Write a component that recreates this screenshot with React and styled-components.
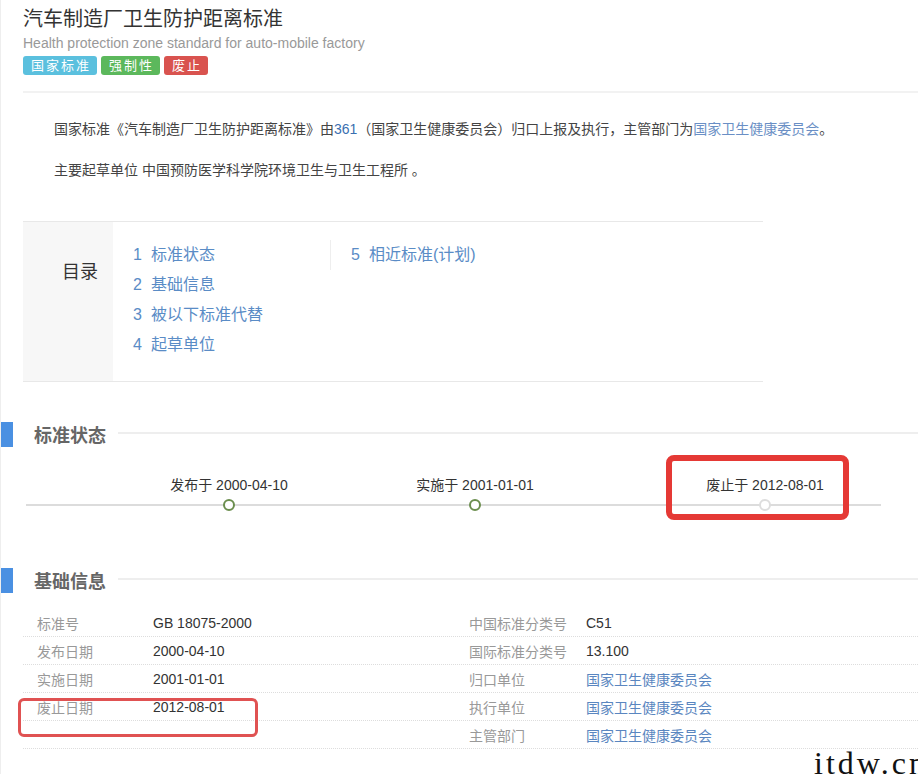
import React from "react"
import styled, { createGlobalStyle } from "styled-components"

const GlobalStyle = createGlobalStyle`
  html, body {
    margin: 0;
    padding: 0;
    background: #ffffff;
    overflow: hidden;
  }
  body {
    font-family: "Liberation Sans", Arial, "Noto Sans CJK SC", sans-serif;
    color: #333;
  }
`

const cjk = `"Liberation Sans", Arial, "Noto Sans CJK SC", sans-serif`

const tocItems = [
  { n: 1, t: "标准状态" },
  { n: 2, t: "基础信息" },
  { n: 3, t: "被以下标准代替" },
  { n: 4, t: "起草单位" },
]

const stops = [
  { label: "发布于 2000-04-10", offset: 123, done: true },
  { label: "实施于 2001-01-01", offset: 86, done: true },
  { label: "废止于 2012-08-01", offset: 130, done: false },
]

const rows = [
  { l1: "标准号", v1: "GB 18075-2000", l2: "中国标准分类号", v2: "C51" },
  { l1: "发布日期", v1: "2000-04-10", l2: "国际标准分类号", v2: "13.100" },
  { l1: "实施日期", v1: "2001-01-01", l2: "归口单位", v2: "国家卫生健康委员会", link: true },
  { l1: "废止日期", v1: "2012-08-01", l2: "执行单位", v2: "国家卫生健康委员会", link: true },
  { l1: "", v1: "", l2: "主管部门", v2: "国家卫生健康委员会", link: true },
]

export default function App() {
  return (
    <>
      <GlobalStyle />
      <Page>
        <Header>
          <Title>汽车制造厂卫生防护距离标准</Title>
          <Subtitle>Health protection zone standard for auto-mobile factory</Subtitle>
          <Tags>
            <Tag $color="#5bc0de">国家标准</Tag>
            <Tag $color="#5cb85c">强制性</Tag>
            <Tag $color="#d9534f">废止</Tag>
          </Tags>
        </Header>

        <Intro>
          <p>
            国家标准《汽车制造厂卫生防护距离标准》由<Num>361</Num>（国家卫生健康委员会）归口上报及执行，主管部门为<Link>国家卫生健康委员会</Link>。
          </p>
          <p>主要起草单位 中国预防医学科学院环境卫生与卫生工程所 。</p>
        </Intro>

        <Toc>
          <TocHead>目录</TocHead>
          <TocBody>
            <TocColumn $width="197px">
              {tocItems.map((i) => (
                <TocItem key={i.n}>
                  <span>{i.n}</span>
                  {i.t}
                </TocItem>
              ))}
            </TocColumn>
            <TocColumn $divider>
              <TocItem>
                <span>5</span>相近标准(计划)
              </TocItem>
            </TocColumn>
          </TocBody>
        </Toc>

        <Section $top="39px">
          <Bar />
          <SectionTitle>标准状态</SectionTitle>
          <SectionRule />
        </Section>

        <Timeline>
          {stops.map((s) => (
            <Stop key={s.label} $offset={s.offset}>
              <StopLabel>{s.label}</StopLabel>
              <Dot $done={s.done} />
            </Stop>
          ))}
          <Mark $left="640px" $top="-20px" $w="183px" $h="65px" $b="6px" $r="8px" />
        </Timeline>

        <Section $top="56px">
          <Bar />
          <SectionTitle>基础信息</SectionTitle>
          <SectionRule />
        </Section>

        <Table>
          {rows.map((r, i) => (
            <Row key={i}>
              <Label>{r.l1}</Label>
              <Value>{r.v1}</Value>
              <Label>{r.l2}</Label>
              <Value $link={r.link}>{r.v2}</Value>
            </Row>
          ))}
          <Mark $left="-5px" $top="89px" $w="240px" $h="39px" $b="3px" $r="6px" $color="#e05252" />
        </Table>

        <Watermark>itdw.cn</Watermark>
      </Page>
    </>
  )
}

const Page = styled.div`
  position: relative;
  width: 918px;
  height: 774px;
  overflow: hidden;
  border-left: 1px solid #eeeeee;
  box-sizing: border-box;
`

const Header = styled.div`
  margin-left: 22px;
  padding-top: 5px;
  padding-bottom: 16px;
  border-bottom: 2px solid #f2f2f2;
`

const Title = styled.h1`
  margin: 0;
  font-family: ${cjk};
  font-size: 20px;
  font-weight: normal;
  line-height: 28px;
  color: #333;
`

const Subtitle = styled.div`
  font-size: 14px;
  line-height: 20px;
  color: #999;
`

const Tags = styled.div`
  display: flex;
  gap: 4px;
  margin-top: 3px;
`

const Tag = styled.span`
  display: inline-block;
  background: ${(p) => p.$color};
  color: #fff;
  font-family: ${cjk};
  font-size: 13px;
  line-height: 19px;
  height: 19px;
  padding: 0 6px 0 8px;
  letter-spacing: 2px;
  border-radius: 3px;
`

const Intro = styled.div`
  margin-left: 53px;
  padding-top: 26px;
  font-family: ${cjk};
  font-size: 14px;
  color: #444;

  p {
    margin: 0 0 21px;
    line-height: 20px;
  }
`

const Num = styled.span`
  font-family: "Liberation Sans", Arial, sans-serif;
  color: #3a6fb0;
`

const Link = styled.span`
  color: #6a8fc5;
`

const Toc = styled.div`
  display: flex;
  margin-left: 22px;
  margin-top: 41px;
  width: 740px;
  height: 159px;
  border-top: 1px solid #e8e8e8;
  border-bottom: 1px solid #e8e8e8;
`

const TocHead = styled.div`
  width: 90px;
  box-sizing: border-box;
  background: #f7f7f7;
  padding: 38px 15px 0 0;
  text-align: right;
  font-family: ${cjk};
  font-size: 18px;
  line-height: 24px;
  color: #333;
`

const TocBody = styled.div`
  display: flex;
  align-items: flex-start;
  padding: 18px 0 0 20px;
`

const TocColumn = styled.div`
  width: ${(p) => p.$width || "auto"};
  border-left: ${(p) => (p.$divider ? "1px solid #eeeeee" : "none")};
  padding-left: ${(p) => (p.$divider ? "20px" : "0")};
`

const TocItem = styled.div`
  font-family: ${cjk};
  font-size: 16px;
  line-height: 30px;
  color: #5a8cc6;

  span {
    margin-right: 9px;
  }
`

const Section = styled.div`
  display: flex;
  align-items: center;
  margin-top: ${(p) => p.$top};
`

const Bar = styled.div`
  width: 12px;
  height: 25px;
  background: #4a90e2;
`

const SectionTitle = styled.h2`
  margin: 0 12px 0 21px;
  font-family: ${cjk};
  font-size: 18px;
  font-weight: bold;
  color: #666;
`

const SectionRule = styled.div`
  flex: 1;
  height: 2px;
  margin-top: -3px;
  background: #eeeeee;
`

const Timeline = styled.div`
  position: relative;
  display: flex;
  margin: 28px 0 0 25px;
  width: 855px;
  background: linear-gradient(#dcdcdc, #dcdcdc) 0 29px / 100% 2px no-repeat;
`

const Stop = styled.div`
  display: flex;
  flex-direction: column;
  align-items: center;
  width: 160px;
  margin-left: ${(p) => p.$offset}px;
`

const StopLabel = styled.div`
  font-family: ${cjk};
  font-size: 14px;
  line-height: 20px;
  color: #333;
`

const Dot = styled.div`
  width: 12px;
  height: 12px;
  box-sizing: border-box;
  margin-top: 4px;
  border-radius: 50%;
  background: #fff;
  border: 2px solid ${(p) => (p.$done ? "#6b8e4e" : "#dddddd")};
`

const Mark = styled.div`
  position: absolute;
  left: ${(p) => p.$left};
  top: ${(p) => p.$top};
  width: ${(p) => p.$w};
  height: ${(p) => p.$h};
  box-sizing: border-box;
  border: ${(p) => p.$b} solid ${(p) => p.$color || "#e53935"};
  border-radius: ${(p) => p.$r};
`

const Table = styled.div`
  position: relative;
  margin: 16px 0 0 22px;
`

const Row = styled.div`
  display: grid;
  grid-template-columns: 116px 316px 117px 1fr;
  padding-left: 14px;
  height: 28px;
  align-items: center;
  border-bottom: 1px dotted #dddddd;
  box-sizing: border-box;
  font-size: 14px;
`

const Label = styled.div`
  font-family: ${cjk};
  color: #999;
`

const Value = styled.div`
  font-family: ${cjk};
  color: ${(p) => (p.$link ? "#5a86c0" : "#333")};
`

const Watermark = styled.div`
  position: absolute;
  left: 813px;
  bottom: -8px;
  font-family: "Liberation Serif", "Times New Roman", serif;
  font-size: 32px;
  letter-spacing: 3px;
  color: #111;
  white-space: nowrap;
`
